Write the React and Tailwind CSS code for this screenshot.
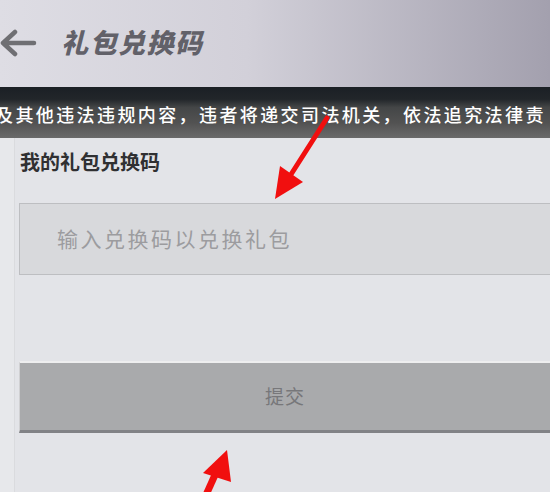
export default function App() {
  return (
    <div className="relative w-[550px] h-[492px] overflow-hidden bg-[#e3e4e8] font-['Noto_Sans_CJK_SC','Noto_Sans',sans-serif]">
      {/* Header */}
      <div className="h-[87px] flex items-center bg-[linear-gradient(90deg,#dedde4_0%,#d2d0d9_45%,#a3a0ae_100%)]">
        <svg width="40" height="30" viewBox="0 0 40 30" className="-mt-[2px]">
          <path d="M3 15 H34 M3 15 L15 4 M3 15 L15 26" stroke="#6f6f73" strokeWidth="4.5" fill="none" strokeLinecap="round" strokeLinejoin="round" />
        </svg>
        <h1 className="ml-[21px] -mt-[3px] text-[27px] font-black italic text-[#626169] tracking-[1.5px]">礼包兑换码</h1>
      </div>

      {/* Notice strip */}
      <div className="h-[51px] flex items-center overflow-hidden bg-[linear-gradient(180deg,#1b2025_0%,#22262a_24%,#444647_40%,#525252_70%,#6a6a6a_100%)]">
        <p className="-ml-[5px] mt-[4px] whitespace-nowrap text-[18px] font-medium text-white tracking-[2.4px]">
          及其他违法违规内容，违者将递交司法机关，依法追究法律责
        </p>
      </div>

      {/* Content */}
      <div className="flex h-full">
        <div className="w-[15px] bg-[#e7e8eb] border-r border-[#dadbde]" />
        <div className="flex-1 pl-[4px]">
          <h2 className="ml-[1px] mt-[11px] text-[20px] font-bold text-[#303032] leading-[26px]">我的礼包兑换码</h2>
          <div className="mt-[28px] h-[72px] flex items-center border border-[#bdbec1] border-r-0 bg-[#d8d9dc] pl-[37px]">
            <span className="text-[21px] text-[#9c9c9f] tracking-[2.5px]">输入兑换码以兑换礼包</span>
          </div>
          <button className="mt-[86px] w-full h-[72px] flex items-center justify-center bg-[#a9aaac] border-t-2 border-t-[#eeeeef] border-b-[3px] border-b-[#818286] border-l border-l-[#d0d0d2]">
            <span className="text-[19px] text-[#77777a] tracking-[1px]">提交</span>
          </button>
        </div>
      </div>

      {/* Red annotation arrows */}
      <svg className="absolute left-0 top-0 pointer-events-none" width="550" height="492" viewBox="0 0 550 492">
        <path d="M327 118 L290 176" stroke="#f10f0f" strokeWidth="5" strokeLinecap="round" />
        <path d="M275 199 L280 166 L303 182 Z" fill="#f10f0f" />
        <path d="M206 495 L219 466" stroke="#f10f0f" strokeWidth="7" />
        <path d="M227 450 L203 473 L231 482 Z" fill="#f10f0f" />
      </svg>
    </div>
  )
}
